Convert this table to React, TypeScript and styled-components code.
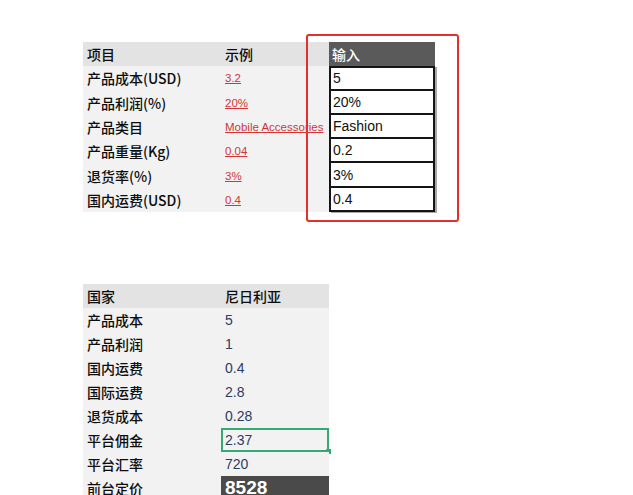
import React from "react";
import styled, { createGlobalStyle } from "styled-components";

const Global = createGlobalStyle`
  html, body { margin: 0; padding: 0; background: #ffffff; }
  body { font-family: "Liberation Sans", "Noto Sans CJK SC", sans-serif; }
`;

const Page = styled.div`
  width: 633px;
  height: 495px;
  overflow: hidden;
  padding: 42px 0 0 83px;
  box-sizing: border-box;
  display: flex;
  flex-direction: column;
  gap: 72px;
  position: relative;
`;

const TopWrap = styled.div`
  position: relative;
  width: 352px;
`;

const Grid = styled.div<{ $cols: string; $row: number }>`
  display: grid;
  grid-template-columns: ${(p) => p.$cols};
  grid-auto-rows: ${(p) => p.$row}px;
`;

const Cell = styled.div<{ $head?: boolean }>`
  background: ${(p) => (p.$head ? "#e3e3e3" : "#f2f2f2")};
  display: flex;
  align-items: center;
  padding-left: 4px;
  font-family: "Noto Sans CJK SC", "Liberation Sans", sans-serif;
  font-size: 14px;
  font-weight: 500;
  color: #0d0d0d;
  white-space: nowrap;
`;

const Example = styled(Cell)`
  font-family: "Liberation Sans", sans-serif;
  font-weight: 400;
  font-size: 11.5px;
  color: #d43434;
  text-decoration: underline;
  overflow: visible;
  position: relative;
  z-index: 0;
`;

const InputHead = styled.div`
  background: #5a5a5a;
  color: #ffffff;
  display: flex;
  align-items: center;
  padding-left: 3px;
  font-family: "Noto Sans CJK SC", sans-serif;
  font-size: 14px;
  font-weight: 500;
`;

const InputCell = styled.div<{ $first?: boolean }>`
  background: #ffffff;
  border: 2px solid #151515;
  border-top-width: ${(p) => (p.$first ? "2px" : "0")};
  box-shadow: 2px 1px 0 #a8a8a8;
  display: flex;
  align-items: center;
  padding-left: 2px;
  font-family: "Liberation Sans", sans-serif;
  font-size: 14px;
  color: #111;
  position: relative;
  z-index: 1;
`;

const Highlight = styled.div`
  position: absolute;
  left: 223px;
  top: -8px;
  width: 149px;
  height: 184px;
  border: 2px solid #e0312e;
  border-radius: 3px;
  pointer-events: none;
`;

const Value = styled(Cell)<{ $selected?: boolean; $total?: boolean }>`
  font-family: "Liberation Sans", sans-serif;
  font-weight: 400;
  color: #2d3c63;
  position: relative;
  ${(p) =>
    p.$selected &&
    `
    box-shadow: inset 0 0 0 2px #36a777;
    padding-left: 4px;
  `}
  ${(p) =>
    p.$total &&
    `
    background: #4a4a4a;
    color: #ffffff;
    font-weight: 700;
    font-size: 19px;
  `}
`;

const Handle = styled.span`
  position: absolute;
  right: -2px;
  bottom: -2px;
  width: 5px;
  height: 5px;
  background: #36a777;
`;

const topRows = [
  ["产品成本(USD)", "3.2", "5"],
  ["产品利润(%)", "20%", "20%"],
  ["产品类目", "Mobile Accessories", "Fashion"],
  ["产品重量(Kg)", "0.04", "0.2"],
  ["退货率(%)", "3%", "3%"],
  ["国内运费(USD)", "0.4", "0.4"],
];

const bottomRows = [
  ["产品成本", "5"],
  ["产品利润", "1"],
  ["国内运费", "0.4"],
  ["国际运费", "2.8"],
  ["退货成本", "0.28"],
  ["平台佣金", "2.37"],
  ["平台汇率", "720"],
  ["前台定价", "8528"],
];

export default function App() {
  return (
    <>
      <Global />
      <Page>
        <TopWrap>
          <Grid $cols="138px 108px 106px" $row={24.3}>
            <Cell $head>项目</Cell>
            <Cell $head>示例</Cell>
            <InputHead>输入</InputHead>
            {topRows.map(([label, ex, val], i) => (
              <React.Fragment key={label}>
                <Cell>{label}</Cell>
                <Example>{ex}</Example>
                <InputCell $first={i === 0}>{val}</InputCell>
              </React.Fragment>
            ))}
          </Grid>
          <Highlight />
        </TopWrap>
        <Grid $cols="138px 108px" $row={24}>
          <Cell $head>国家</Cell>
          <Cell $head>尼日利亚</Cell>
          {bottomRows.map(([label, val]) => (
            <React.Fragment key={label}>
              <Cell>{label}</Cell>
              <Value $selected={label === "平台佣金"} $total={label === "前台定价"}>
                {val}
                {label === "平台佣金" && <Handle />}
              </Value>
            </React.Fragment>
          ))}
        </Grid>
      </Page>
    </>
  );
}
